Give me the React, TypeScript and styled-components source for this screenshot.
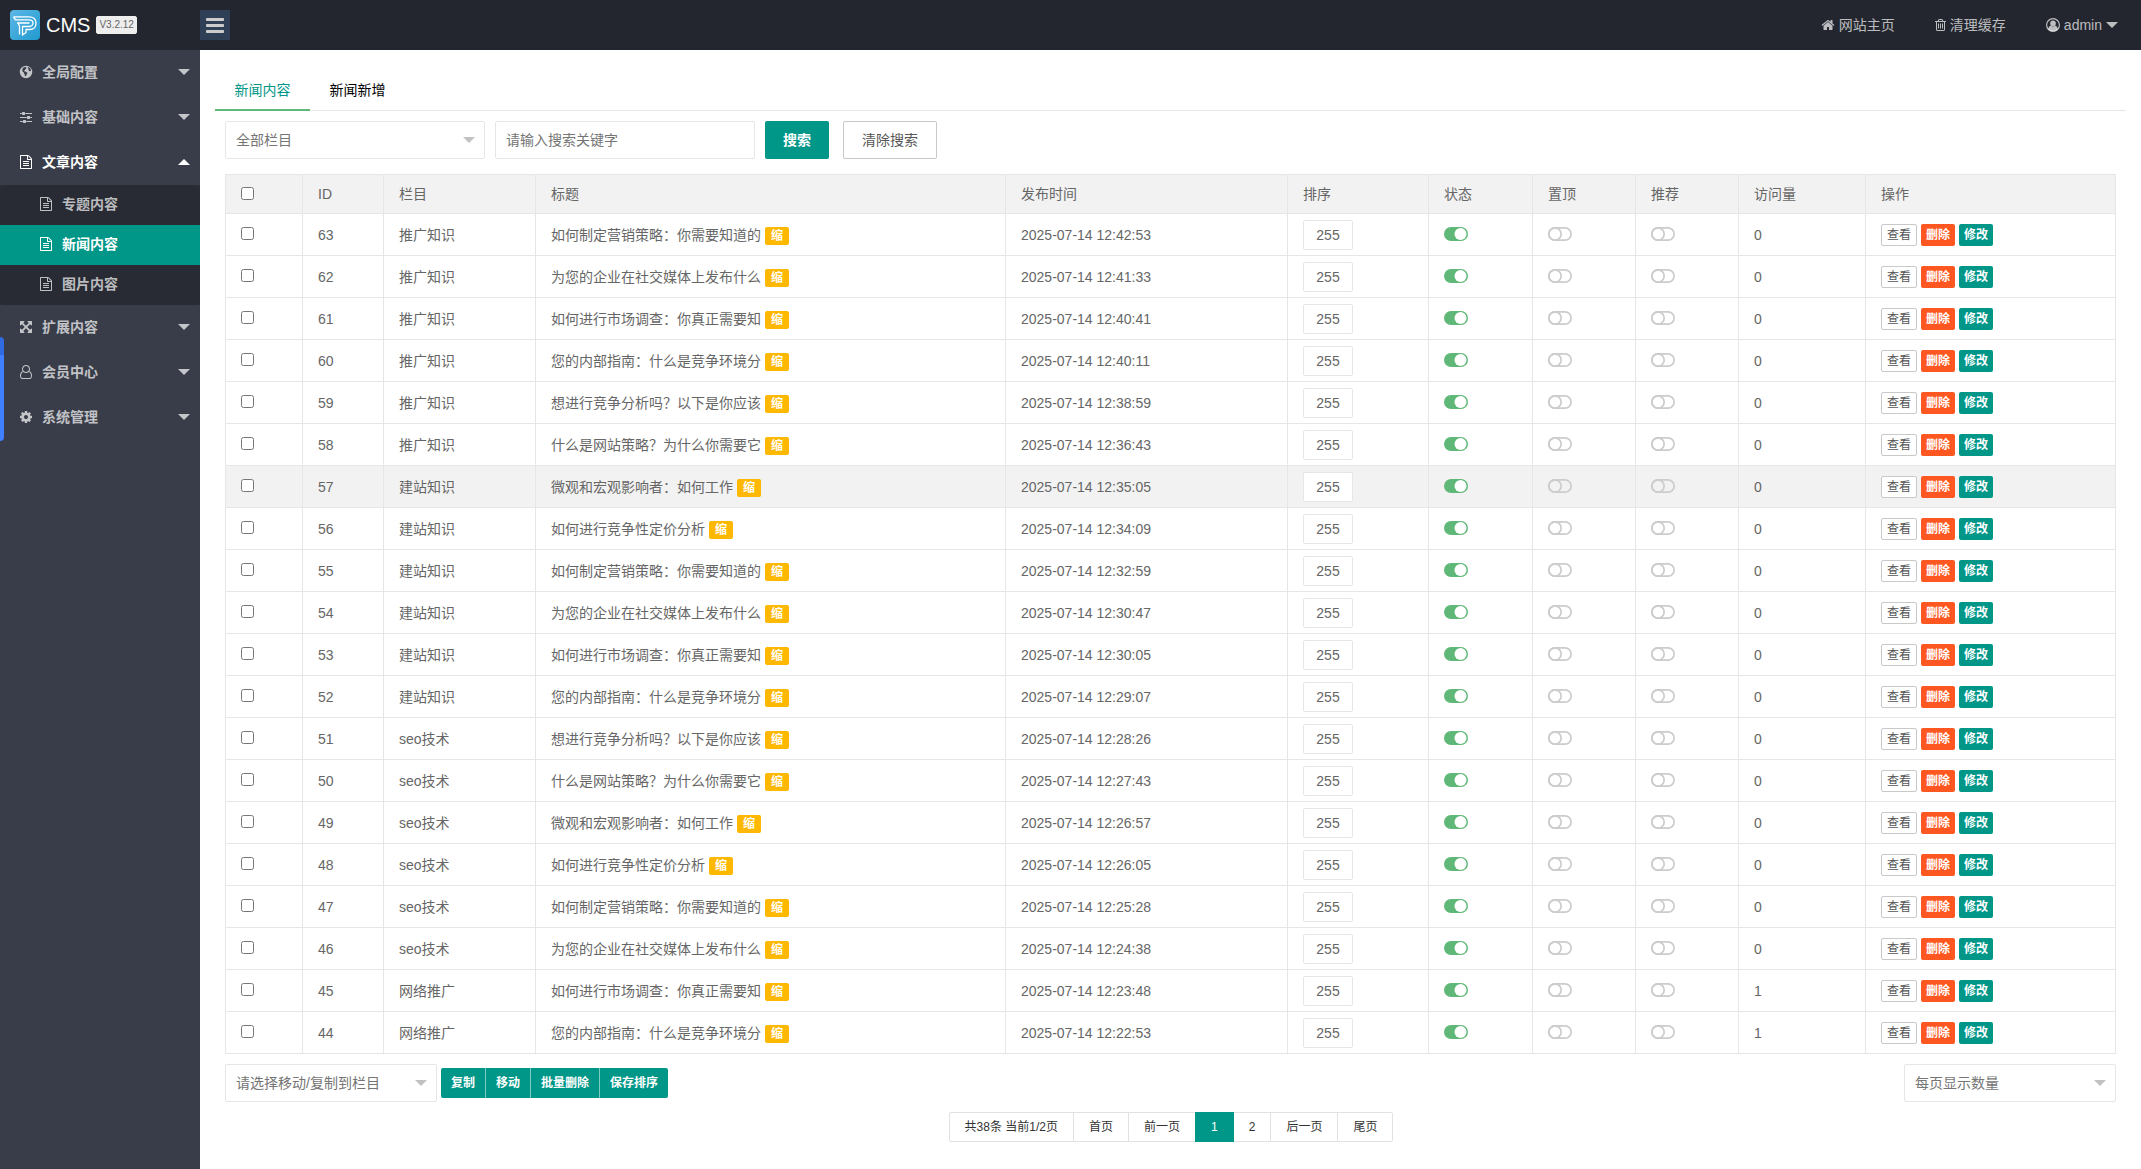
import React, { useState } from 'react';
import styled, { createGlobalStyle, css } from 'styled-components';

const GlobalStyle = createGlobalStyle`
  * { box-sizing: border-box; }
  body {
    margin: 0;
    background: #fff;
    color: #666;
    font: 14px/24px "Liberation Sans", "Noto Sans CJK SC", sans-serif;
  }
  button, input, select { font: inherit; color: inherit; margin: 0; }
  button { cursor: pointer; }
  a { color: inherit; text-decoration: none; }
  ul { list-style: none; margin: 0; padding: 0; }
`;

/* ---------- icons ---------- */

const paths = {
  file: 'M1596 380q28 28 48 76t20 88v1152q0 40-28 68t-68 28h-1344q-40 0-68-28t-28-68v-1600q0-40 28-68t68-28h896q40 0 88 20t76 48zm-444-244v376h376q-10-29-22-41l-313-313q-12-12-41-22zm384 1528v-1024h-416q-40 0-68-28t-28-68v-416h-768v1536h1280zm-1024-864q0-14 9-23t23-9h704q14 0 23 9t9 23v64q0 14-9 23t-23 9h-704q-14 0-23-9t-9-23v-64zm736 224q14 0 23 9t9 23v64q0 14-9 23t-23 9h-704q-14 0-23-9t-9-23v-64q0-14 9-23t23-9h704zm0 256q14 0 23 9t9 23v64q0 14-9 23t-23 9h-704q-14 0-23-9t-9-23v-64q0-14 9-23t23-9h704z',
  trash: 'M704 736v576q0 14-9 23t-23 9h-64q-14 0-23-9t-9-23v-576q0-14 9-23t23-9h64q14 0 23 9t9 23zm256 0v576q0 14-9 23t-23 9h-64q-14 0-23-9t-9-23v-576q0-14 9-23t23-9h64q14 0 23 9t9 23zm256 0v576q0 14-9 23t-23 9h-64q-14 0-23-9t-9-23v-576q0-14 9-23t23-9h64q14 0 23 9t9 23zm128 724v-948h-896v948q0 22 7 40.5t14.5 27 10.5 8.5h832q3 0 10.5-8.5t14.5-27 7-40.5zm-672-1076h448l-48-117q-7-9-17-11h-317q-10 2-17 11zm928 32v64q0 14-9 23t-23 9h-96v948q0 83-47 143.5t-113 60.5h-832q-66 0-113-58.5t-47-141.5v-952h-96q-14 0-23-9t-9-23v-64q0-14 9-23t23-9h309l70-167q15-37 54-63t79-26h320q40 0 79 26t54 63l70 167h309q14 0 23 9t9 23z',
  home: 'M1472 992v480q0 26-19 45t-45 19h-384v-384h-256v384h-384q-26 0-45-19t-19-45v-480q0-1 .5-3t.5-3l575-474 575 474q1 2 1 6zm223-69l-62 74q-8 9-21 11h-3q-13 0-21-7l-692-577-692 577q-12 8-24 7-13-2-21-11l-62-74q-8-10-7-23.5t11-21.5l719-599q32-26 76-26t76 26l244 204v-195q0-14 9-23t23-9h192q14 0 23 9t9 23v408l219 182q10 8 11 21.5t-7 23.5z',
  cog: 'M1152 896q0-106-75-181t-181-75-181 75-75 181 75 181 181 75 181-75 75-181zm512-109v222q0 12-8 23t-20 13l-185 28q-19 54-39 91 35 50 107 138 10 12 10 25t-9 23q-27 37-99 108t-94 71q-12 0-26-9l-138-108q-44 23-91 38-16 136-29 186-7 28-36 28h-222q-14 0-24.5-8.5t-11.5-21.5l-28-184q-49-16-90-37l-141 107q-10 9-25 9-14 0-25-11-126-114-165-168-7-10-7-23 0-12 8-23 15-21 51-66.5t54-70.5q-27-50-41-99l-183-27q-13-2-21-12.5t-8-23.5v-222q0-12 8-23t19-13l186-28q14-46 39-92-40-57-107-138-10-12-10-24 0-10 9-23 26-36 98.5-107.5t94.5-71.5q13 0 26 10l138 107q44-23 91-38 16-136 29-186 7-28 36-28h222q14 0 24.5 8.5t11.5 21.5l28 184q49 16 90 37l142-107q9-9 24-9 13 0 25 10 129 119 165 170 7 8 7 22 0 12-8 23-15 21-51 66.5t-54 70.5q26 50 41 98l183 28q13 2 21 12.5t8 23.5z',
  arrows: 'M1411 541l-355 355 355 355 144-144q29-31 70-14 39 17 39 59v448q0 26-19 45t-45 19h-448q-42 0-59-40-17-39 14-69l144-144-355-355-355 355 144 144q31 30 14 69-17 40-59 40h-448q-26 0-45-19t-19-45v-448q0-42 40-59 39-17 69 14l144 144 355-355-355-355-144 144q-19 19-45 19-12 0-24-5-40-17-40-59v-448q0-26 19-45t45-19h448q42 0 59 40 17 39-14 69l-144 144 355 355 355-355-144-144q-31-30-14-69 17-40 59-40h448q26 0 45 19t19 45v448q0 42-39 59-13 5-25 5-26 0-45-19z',
  sliders: 'M480 1408v128h-352v-128h352zm352-128q26 0 45 19t19 45v256q0 26-19 45t-45 19h-256q-26 0-45-19t-19-45v-256q0-26 19-45t45-19h256zm160-384v128h-864v-128h864zm-640-512v128h-224v-128h224zm1312 1024v128h-736v-128h736zm-960-1152q26 0 45 19t19 45v256q0 26-19 45t-45 19h-256q-26 0-45-19t-19-45v-256q0-26 19-45t45-19h256zm640 512q26 0 45 19t19 45v256q0 26-19 45t-45 19h-256q-26 0-45-19t-19-45v-256q0-26 19-45t45-19h256zm320 128v128h-224v-128h224zm0-512v128h-864v-128h864z',
  user: 'M1329 784q47 14 89.5 38t89 73 79.5 115.5 55 172 22 236.5q0 154-100 263.5t-241 109.5h-854q-141 0-241-109.5t-100-263.5q0-131 22-236.5t55-172 79.5-115.5 89-73 89.5-38q-79-125-79-272 0-104 40.5-198.5t109.5-163.5 163.5-109.5 198.5-40.5 198.5 40.5 163.5 109.5 109.5 163.5 40.5 198.5q0 147-79 272zm-433-656q-159 0-271.5 112.5t-112.5 271.5 112.5 271.5 271.5 112.5 271.5-112.5 112.5-271.5-112.5-271.5-271.5-112.5zm427 1536q88 0 150.5-71.5t62.5-173.5q0-239-78.5-377t-225.5-145q-145 127-336 127t-336-127q-147 7-225.5 145t-78.5 377q0 102 62.5 173.5t150.5 71.5h854z',
  globe: 'M896 96a800 800 0 1 0 0 1600a800 800 0 1 0 0-1600zM480 400l160-120 230-40 90 70-80 70 60 80-130 90-50 110-140 60 30 90 130 0 110 90 160 60 30 110-120 130-50 160-90 90-70-40-10-200-110-130 20-120-150-80-80-130 20-150zM1130 300l120-10 170 140 100 180-20 150-120 50-120-90-60-110 60-110-130-90z',
};

type IconName = keyof typeof paths;

const IconSvg = styled.svg`
  display: block;
  flex: none;
  fill: currentColor;
`;

const Icon = ({ name, size = 14 }: { name: IconName; size?: number }) => (
  <IconSvg width={size} height={size} viewBox="0 0 1792 1792" fillRule="evenodd" aria-hidden="true">
    <path d={paths[name]} />
  </IconSvg>
);

const TrashIcon = () => (
  <IconSvg width={11} height={14} viewBox="192 0 1408 1792" aria-hidden="true">
    <path d={paths.trash} />
  </IconSvg>
);

const UserCircleIcon = () => (
  <IconSvg width={14} height={14} viewBox="0 0 14 14" aria-hidden="true">
    <circle cx="7" cy="7" r="6.4" fill="none" stroke="currentColor" strokeWidth="1.2" />
    <circle cx="7" cy="5.4" r="2.8" />
    <path d="M2.2 11.2C2.5 9 3.4 8 4.7 7.6C6 8.9 8 8.9 9.3 7.6C10.6 8 11.5 9 11.8 11.2C9.3 14 4.7 14 2.2 11.2Z" />
  </IconSvg>
);

const BarsIcon = () => (
  <IconSvg width={18} height={15} viewBox="0 0 18 15" aria-hidden="true">
    <rect width="18" height="3" rx="0.7" />
    <rect y="6" width="18" height="3" rx="0.7" />
    <rect y="12" width="18" height="3" rx="0.7" />
  </IconSvg>
);

const LogoIcon = () => (
  <IconSvg width={30} height={30} viewBox="0 0 30 30" aria-hidden="true">
    <defs>
      <linearGradient id="logoFill" x1="0" y1="0" x2="1" y2="1">
        <stop offset="0" stopColor="#5cb8e6" />
        <stop offset="1" stopColor="#2199cf" />
      </linearGradient>
    </defs>
    <rect width="30" height="30" rx="4" fill="url(#logoFill)" />
    <g fill="none" stroke="#fff" strokeWidth="1.3" strokeLinejoin="round">
      <path d="M3.500 6.800H19C23.500 6.800 26 9.500 26 13C26 17 23.500 19.500 19.500 19.500H16V22.500L12.500 25V16.500H18.500C21.500 16.500 23 15.200 23 13C23 11 21.500 9.800 19 9.800H5.500L3.500 6.800" />
      <path d="M7 13H19.500M8 13L9.500 16V24.500" />
    </g>
  </IconSvg>
);

/* ---------- header ---------- */

const Header = styled.header`
  display: flex;
  align-items: center;
  height: 50px;
  background: #23262e;
  color: rgba(255, 255, 255, 0.7);
`;

const Brand = styled.div`
  display: flex;
  align-items: center;
  width: 200px;
  padding-left: 10px;
  color: #fff;
  font-size: 20px;
`;

const BrandName = styled.span`
  margin: 0 6px;
`;

const Version = styled.span`
  padding: 0 2px;
  border: 1px solid #eee;
  border-radius: 2px;
  background: #eee;
  color: #666;
  font-size: 10px;
  line-height: 16px;
`;

const MenuToggle = styled.button`
  display: grid;
  place-items: center;
  width: 30px;
  height: 30px;
  padding: 0;
  border: 0;
  background: #2f4056;
  color: #ccc;
`;

const TopNav = styled.nav`
  display: flex;
  margin-left: auto;
  padding-right: 20px;
`;

const TopLink = styled.a`
  display: flex;
  align-items: center;
  gap: 4px;
  padding: 0 20px;
  line-height: 50px;
`;

const Caret = styled.span<{ $up?: boolean }>`
  flex: none;
  width: 0;
  height: 0;
  border: 6px solid transparent;
  ${(p) =>
    p.$up
      ? css`border-top-width: 0; border-bottom-color: #fff;`
      : css`border-bottom-width: 0; border-top-color: rgba(255, 255, 255, 0.7);`}
`;

const UserLink = styled(TopLink)`
  padding-right: 3px;
`;

/* ---------- side menu ---------- */

const Shell = styled.div`
  display: flex;
  min-height: calc(100vh - 50px);
`;

const Sidebar = styled.nav`
  flex: none;
  width: 200px;
  background: #393d49;
  font-weight: 700;
`;

const MenuLink = styled.a<{ $open?: boolean }>`
  display: flex;
  align-items: center;
  gap: 9px;
  height: 45px;
  padding: 0 10px 2px 19px;
  color: ${(p) => (p.$open ? '#fff' : 'rgba(255, 255, 255, 0.7)')};

  ${Caret} { margin-left: auto; }
`;

const SubMenu = styled.ul`
  border-radius: 2px;
  background: #282b33;
`;

const SubLink = styled(MenuLink)<{ $active?: boolean }>`
  height: 40px;
  padding-left: 39px;
  ${(p) => p.$active && css`background: #009688; color: #fff;`}
`;

const SideHandle = styled.div`
  position: fixed;
  left: 0;
  top: 337px;
  width: 4px;
  height: 104px;
  border-radius: 0 5px 5px 0;
  background: linear-gradient(#2f6ae0 18px, #4080ff 18px);
`;

/* ---------- content ---------- */

const Main = styled.main`
  flex: 1;
  min-width: 0;
  padding: 20px 15px 0;
`;

const Tabs = styled.div`
  display: flex;
  border-bottom: 1px solid #e6e6e6;
`;

const Tab = styled.button<{ $active?: boolean }>`
  min-width: 95px;
  height: 41px;
  margin-bottom: -1px;
  padding: 0;
  border: 0;
  border-bottom: 2px solid ${(p) => (p.$active ? '#5fb878' : 'transparent')};
  background: none;
  color: ${(p) => (p.$active ? '#009688' : '#000')};
`;

const Panel = styled.div`
  padding: 10px;
`;

const SearchForm = styled.form`
  display: flex;
  gap: 10px;
  margin-bottom: 15px;
`;

const SelectBox = styled.div<{ $width: number }>`
  position: relative;
  width: ${(p) => p.$width}px;

  &::after {
    content: '';
    position: absolute;
    right: 10px;
    top: 16px;
    border: 6px solid transparent;
    border-bottom-width: 0;
    border-top-color: #c2c2c2;
    pointer-events: none;
  }
`;

const field = css`
  width: 100%;
  height: 38px;
  padding: 0 10px 1px;
  border: 1px solid #e6e6e6;
  border-radius: 2px;
  background: #fff;
  color: #757575;
`;

const Select = styled.select`
  ${field}
  display: block;
  appearance: none;
`;

const Keyword = styled.input`
  ${field}
  width: 260px;
  &::placeholder { color: #757575; opacity: 1; }
`;

type Tone = 'primary' | 'plain' | 'danger';

const tones = {
  primary: css`border: 0; background: #009688; color: #fff; font-weight: 700;`,
  danger: css`border: 0; background: #ff5722; color: #fff; font-weight: 700;`,
  plain: css`border: 1px solid #c9c9c9; background: #fff; color: #555;`,
};

const Button = styled.button<{ $tone: Tone }>`
  height: 38px;
  padding: 0 18px;
  border-radius: 2px;
  white-space: nowrap;
  ${(p) => tones[p.$tone]}
`;

const ClearButton = styled(Button)`
  margin-left: 4px;
`;

const TinyButton = styled(Button)`
  height: 22px;
  padding: 0 5px;
  font-size: 12px;
  line-height: 20px;
`;

const Table = styled.table`
  width: 100%;
  table-layout: fixed;
  border-collapse: collapse;
  line-height: 20px;
`;

const Th = styled.th`
  height: 39px;
  padding: 0 15px;
  border: 1px solid #e6e6e6;
  background: #f2f2f2;
  font-weight: 400;
  text-align: left;
`;

const Td = styled.td`
  height: 42px;
  padding: 0 15px;
  border: 1px solid #e6e6e6;
  white-space: nowrap;
`;

const Row = styled.tr<{ $hovered?: boolean }>`
  background: ${(p) => (p.$hovered ? '#f2f2f2' : '#fff')};
`;

const Check = styled.input`
  display: block;
  width: 13px;
  height: 13px;
  && { margin-bottom: 2px; }
`;

const Title = styled.div`
  display: flex;
  align-items: center;
  gap: 4px;
`;

const ThumbBadge = styled.span`
  margin-top: 2px;
  padding: 0 6px;
  border-radius: 2px;
  background: #ffb800;
  color: #fff;
  font-size: 12px;
  font-weight: 700;
  line-height: 18px;
`;

const SortInput = styled.input`
  display: block;
  width: 50px;
  height: 30px;
  padding: 0;
  border: 1px solid #e6e6e6;
  border-radius: 2px;
  background: #fff;
  text-align: center;
`;

const SwitchButton = styled.button<{ $on: boolean }>`
  display: block;
  padding: 0 0 2px;
  border: 0;
  background: none;
  color: ${(p) => (p.$on ? '#5fb878' : '#ccc')};
`;

const Actions = styled.div`
  display: flex;
  gap: 4px;
`;

const Toolbar = styled.div`
  display: flex;
  align-items: center;
  gap: 4px;
  margin: 10px 0;

  & > :last-child { margin-left: auto; }
`;

const ButtonGroup = styled.div`
  display: flex;
`;

const GroupButton = styled(Button)`
  height: 30px;
  padding: 0 10px;
  border-radius: 0;
  font-size: 12px;
  &:first-child { border-radius: 2px 0 0 2px; }
  &:last-child { border-radius: 0 2px 2px 0; }
  & + & { border-left: 1px solid #80cbc4; }
`;

const Pager = styled.nav`
  display: flex;
  justify-content: center;
  color: #333;
  font-size: 12px;
  line-height: 28px;
`;

const pageCell = css`
  margin-right: -1px;
  padding: 0 15px;
  border: 1px solid #e2e2e2;
  background: #fff;
  &:first-child { border-radius: 2px 0 0 2px; }
  &:last-child { border-radius: 0 2px 2px 0; }
`;

const PageInfo = styled.span`
  ${pageCell}
`;

const PageLink = styled.a<{ $current?: boolean }>`
  ${pageCell}
  ${(p) => p.$current && css`border-color: #009688; background: #009688; color: #fff; z-index: 1;`}
`;

/* ---------- data ---------- */

const menu: { icon: IconName; label: string; children?: string[] }[] = [
  { icon: 'globe', label: '全局配置' },
  { icon: 'sliders', label: '基础内容' },
  { icon: 'file', label: '文章内容', children: ['专题内容', '新闻内容', '图片内容'] },
  { icon: 'arrows', label: '扩展内容' },
  { icon: 'user', label: '会员中心' },
  { icon: 'cog', label: '系统管理' },
];

const rows: [number, string, string, string, number][] = [
  [63, '推广知识', '如何制定营销策略：你需要知道的', '12:42:53', 0],
  [62, '推广知识', '为您的企业在社交媒体上发布什么', '12:41:33', 0],
  [61, '推广知识', '如何进行市场调查：你真正需要知', '12:40:41', 0],
  [60, '推广知识', '您的内部指南：什么是竞争环境分', '12:40:11', 0],
  [59, '推广知识', '想进行竞争分析吗？以下是你应该', '12:38:59', 0],
  [58, '推广知识', '什么是网站策略？为什么你需要它', '12:36:43', 0],
  [57, '建站知识', '微观和宏观影响者：如何工作', '12:35:05', 0],
  [56, '建站知识', '如何进行竞争性定价分析', '12:34:09', 0],
  [55, '建站知识', '如何制定营销策略：你需要知道的', '12:32:59', 0],
  [54, '建站知识', '为您的企业在社交媒体上发布什么', '12:30:47', 0],
  [53, '建站知识', '如何进行市场调查：你真正需要知', '12:30:05', 0],
  [52, '建站知识', '您的内部指南：什么是竞争环境分', '12:29:07', 0],
  [51, 'seo技术', '想进行竞争分析吗？以下是你应该', '12:28:26', 0],
  [50, 'seo技术', '什么是网站策略？为什么你需要它', '12:27:43', 0],
  [49, 'seo技术', '微观和宏观影响者：如何工作', '12:26:57', 0],
  [48, 'seo技术', '如何进行竞争性定价分析', '12:26:05', 0],
  [47, 'seo技术', '如何制定营销策略：你需要知道的', '12:25:28', 0],
  [46, 'seo技术', '为您的企业在社交媒体上发布什么', '12:24:38', 0],
  [45, '网络推广', '如何进行市场调查：你真正需要知', '12:23:48', 1],
  [44, '网络推广', '您的内部指南：什么是竞争环境分', '12:22:53', 1],
];

const columns: { label: string; width?: number }[] = [
  { label: 'ID', width: 81 },
  { label: '栏目', width: 152 },
  { label: '标题' },
  { label: '发布时间', width: 282 },
  { label: '排序', width: 141 },
  { label: '状态', width: 104 },
  { label: '置顶', width: 103 },
  { label: '推荐', width: 103 },
  { label: '访问量', width: 127 },
  { label: '操作', width: 250 },
];

const Switch = ({ initial, label }: { initial: boolean; label: string }) => {
  const [on, setOn] = useState(initial);
  return (
    <SwitchButton type="button" role="switch" aria-checked={on} aria-label={label} $on={on} onClick={() => setOn(!on)}>
      <IconSvg width={24} height={14} viewBox="0 0 24 14" aria-hidden="true">
        {on ? (
          <>
            <rect width="24" height="14" rx="7" />
            <circle cx="16.500" cy="7" r="6" fill="#fff" />
          </>
        ) : (
          <g fill="none" stroke="currentColor" strokeWidth="1.700">
            <rect x="0.850" y="0.850" width="22.300" height="12.300" rx="6.150" />
            <circle cx="7" cy="7" r="6.150" />
          </g>
        )}
      </IconSvg>
    </SwitchButton>
  );
};

const DropDown = ({ label, width }: { label: string; width: number }) => (
  <SelectBox $width={width}>
    <Select aria-label={label}>
      <option>{label}</option>
    </Select>
  </SelectBox>
);

export default function App() {
  return (
    <>
      <GlobalStyle />
      <Header>
        <Brand>
          <LogoIcon />
          <BrandName>CMS</BrandName>
          <Version>V3.2.12</Version>
        </Brand>
        <MenuToggle type="button" aria-label="菜单">
          <BarsIcon />
        </MenuToggle>
        <TopNav>
          <TopLink href="#"><Icon name="home" />网站主页</TopLink>
          <TopLink href="#"><TrashIcon />清理缓存</TopLink>
          <UserLink href="#"><UserCircleIcon />admin<Caret /></UserLink>
        </TopNav>
      </Header>
      <Shell>
        <Sidebar>
          <ul>
            {menu.map((item) => (
              <li key={item.label}>
                <MenuLink href="#" $open={!!item.children}>
                  <Icon name={item.icon} />
                  {item.label}
                  <Caret $up={!!item.children} />
                </MenuLink>
                {item.children && (
                  <SubMenu>
                    {item.children.map((child) => (
                      <li key={child}>
                        <SubLink href="#" $active={child === '新闻内容'}>
                          <Icon name="file" />
                          {child}
                        </SubLink>
                      </li>
                    ))}
                  </SubMenu>
                )}
              </li>
            ))}
          </ul>
        </Sidebar>
        <Main>
          <Tabs role="tablist">
            <Tab type="button" role="tab" aria-selected="true" $active>新闻内容</Tab>
            <Tab type="button" role="tab" aria-selected="false">新闻新增</Tab>
          </Tabs>
          <Panel>
            <SearchForm onSubmit={(e) => e.preventDefault()}>
              <DropDown label="全部栏目" width={260} />
              <Keyword type="text" aria-label="搜索关键字" placeholder="请输入搜索关键字" />
              <Button type="submit" $tone="primary">搜索</Button>
              <ClearButton type="reset" $tone="plain">清除搜索</ClearButton>
            </SearchForm>
            <Table>
              <colgroup>
                <col width={77} />
                {columns.map((c) => <col key={c.label} width={c.width} />)}
              </colgroup>
              <thead>
                <tr>
                  <Th><Check type="checkbox" aria-label="全选" /></Th>
                  {columns.map((c) => <Th key={c.label}>{c.label}</Th>)}
                </tr>
              </thead>
              <tbody>
                {rows.map(([id, category, title, time, visits]) => (
                  <Row key={id} $hovered={id === 57}>
                    <Td><Check type="checkbox" aria-label={`选择 ${id}`} /></Td>
                    <Td>{id}</Td>
                    <Td>{category}</Td>
                    <Td><Title>{title}<ThumbBadge>缩</ThumbBadge></Title></Td>
                    <Td>2025-07-14 {time}</Td>
                    <Td><SortInput type="text" aria-label="排序" defaultValue="255" /></Td>
                    <Td><Switch initial label="状态" /></Td>
                    <Td><Switch initial={false} label="置顶" /></Td>
                    <Td><Switch initial={false} label="推荐" /></Td>
                    <Td>{visits}</Td>
                    <Td>
                      <Actions>
                        <TinyButton type="button" $tone="plain">查看</TinyButton>
                        <TinyButton type="button" $tone="danger">删除</TinyButton>
                        <TinyButton type="button" $tone="primary">修改</TinyButton>
                      </Actions>
                    </Td>
                  </Row>
                ))}
              </tbody>
            </Table>
            <Toolbar>
              <DropDown label="请选择移动/复制到栏目" width={212} />
              <ButtonGroup>
                {['复制', '移动', '批量删除', '保存排序'].map((t) => (
                  <GroupButton key={t} type="button" $tone="primary">{t}</GroupButton>
                ))}
              </ButtonGroup>
              <DropDown label="每页显示数量" width={212} />
            </Toolbar>
            <Pager aria-label="分页">
              <PageInfo>共38条 当前1/2页</PageInfo>
              <PageLink href="#">首页</PageLink>
              <PageLink href="#">前一页</PageLink>
              <PageLink href="#" $current aria-current="page">1</PageLink>
              <PageLink href="#">2</PageLink>
              <PageLink href="#">后一页</PageLink>
              <PageLink href="#">尾页</PageLink>
            </Pager>
          </Panel>
        </Main>
      </Shell>
      <SideHandle />
    </>
  );
}
